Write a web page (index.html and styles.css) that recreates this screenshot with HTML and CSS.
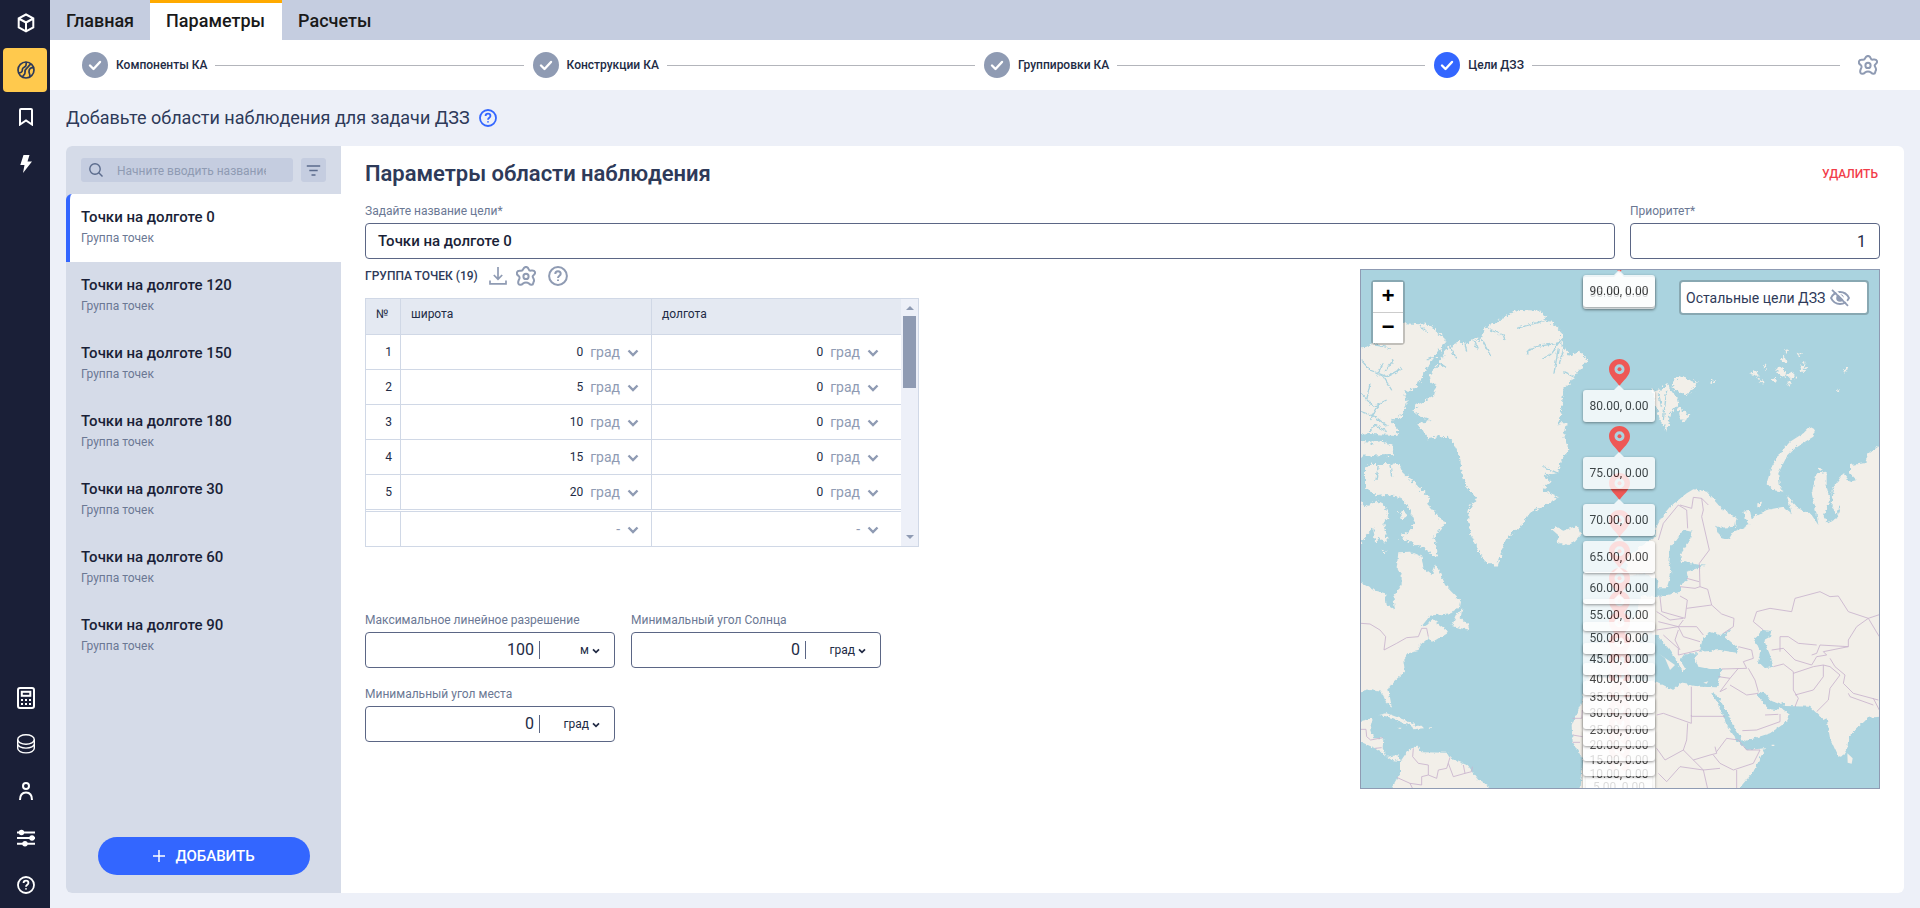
FILE: index.html
```html
<!DOCTYPE html>
<html lang="ru">
<head>
<meta charset="utf-8">
<title>Цели ДЗЗ</title>
<link rel="stylesheet" href="styles.css">
</head>
<body>
<svg class="defs" width="0" height="0">
  <symbol id="gear" viewBox="0 0 20 20"><path d="M10 .9c1.700 0 2.300 1 2.700 2.300.3 1 1.200 1.600 2.300 1.400 1.700-.3 3.300-.2 3.900 1.200.6 1.500-.2 2.500-1.400 3.400-.9.700-1 1.700-.4 2.600.9 1.400 1.300 3.100.4 4.300-.4 1.500-.2 2.600-1.700 2.700-1.600.2-2.300-.7-3.100-1.500-.9-.7-1.900-.8-2.700-.8s-1.800.1-2.700.8c-.8.8-1.500 1.700-3.100 1.500-1.500-.1-2.100-1.200-2-2.700.1-1.200.9-2.600 1.300-3.900.2-1-.2-1.800-1-2.400C1.300 9 .5 7.900.9 6.400 1.400 4.900 2.800 4.500 4.500 4.700c1.200.2 2.300-.4 2.700-1.500C7.700 1.900 8.300.9 10 .9z"/><circle cx="10" cy="10.400" r="2.600"/></symbol>
  <symbol id="help" viewBox="0 0 20 20"><circle cx="10" cy="10" r="8.900"/><path d="M7.300 7.900c0-1.700 1.100-2.700 2.700-2.700s2.700 1 2.700 2.500c0 2-2.700 2-2.700 4.200M10 13.600v1.500"/></symbol>
  <symbol id="chev" viewBox="0 0 12 8"><path d="M1.500 1.500 6 6l4.500-4.500"/></symbol>
  <symbol id="check" viewBox="0 0 26 26"><circle class="disc" cx="13" cy="13" r="13"/><path d="M8 13.500l3.500 3.500L18 10"/></symbol>
  <symbol id="pin" viewBox="0 0 21 27"><path fill-rule="evenodd" d="M10.500 0C4.700 0 0 4.500 0 10.200 0 17 7 21.500 10.500 27 14 21.500 21 17 21 10.200 21 4.500 16.300 0 10.500 0zm0 5.200a5 5 0 1 1 0 10 5 5 0 0 1 0-10z"/><circle cx="10.500" cy="10.200" r="2"/></symbol>
</svg>
<div class="app">
  <nav class="rail">
    <div class="rail-group">
      <a class="rail-item"><svg width="18" height="20" viewBox="0 0 18 20"><path d="M9 1.500l7.300 3.800v9L9 18.300l-7.300-4v-9zM1.700 5.500L9 9.500l7.300-4M9 9.500v8.500"/></svg></a>
      <a class="rail-item active"><svg width="18" height="18" viewBox="0 0 18 18"><circle cx="9" cy="9" r="8"/><path d="M1.500 11.800C4 11.800 5.500 11 5.300 8.800 5.100 6.600 7 6.500 8.300 5.500 9.700 4.400 8.700 2.500 9.500 1M5.500 16.300C5.500 14 8.200 14 8 11.500 7.800 9 8.600 8 10 7 11.500 6 11.500 4.300 14 3M16.800 7C14 6 12 8 12 10.500S13.500 13 12.800 16.300"/></svg></a>
      <a class="rail-item"><svg width="14" height="18" viewBox="0 0 14 18"><path d="M1 2a1 1 0 0 1 1-1h10a1 1 0 0 1 1 1v14.500l-6-4-6 4z"/></svg></a>
      <a class="rail-item"><svg width="12" height="18" viewBox="0 0 12 18"><path class="solid" d="M3.500 0h6L7.500 6.500H12L3 18l1.500-8H.3z"/></svg></a>
    </div>
    <div class="rail-group">
      <a class="rail-item calc"><svg width="18" height="22" viewBox="0 0 18 22"><rect x="1" y="1" width="16" height="20" rx="2"/><rect x="4.800" y="4.800" width="8.500" height="4"/><path stroke-dasharray="2 2" d="M4 13h10M4 17h10"/></svg></a>
      <a class="rail-item thin"><svg width="18" height="20" viewBox="0 0 18 20"><ellipse cx="9" cy="5.500" rx="8.300" ry="4.700"/><path d="M.7 5.500v4.300c0 2.500 3.700 4.300 8.300 4.300s8.300-1.800 8.300-4.300V5.500M.7 9.800v4.400c0 2.600 3.700 4.700 8.300 4.700s8.300-2.100 8.300-4.700V9.800"/></svg></a>
      <a class="rail-item"><svg width="14" height="18" viewBox="0 0 14 18"><circle cx="7" cy="4" r="3"/><path d="M1 18c0-5 2-7.500 6-7.500s6 2.500 6 7.500"/></svg></a>
      <a class="rail-item"><svg width="18" height="18" viewBox="0 0 18 18"><path d="M0 3.500h18M0 9h18M0 14.700h18"/><circle class="solid" cx="4.500" cy="3.500" r="2.700"/><circle class="solid" cx="15" cy="9" r="2.700"/><circle class="solid" cx="8" cy="14.700" r="2.700"/></svg></a>
      <a class="rail-item"><svg width="18" height="18"><use href="#help"/></svg></a>
    </div>
  </nav>
  <div class="page">
    <header class="tabs"><a class="tab">Главная</a><a class="tab current">Параметры</a><a class="tab">Расчеты</a></header>
    <div class="stepper">
      <div class="steps">
        <svg class="mark"><use href="#check"/></svg><span class="step">Компоненты КА</span><i class="line"></i>
        <svg class="mark"><use href="#check"/></svg><span class="step">Конструкции КА</span><i class="line"></i>
        <svg class="mark"><use href="#check"/></svg><span class="step">Группировки КА</span><i class="line"></i>
        <svg class="mark on"><use href="#check"/></svg><span class="step">Цели ДЗЗ</span><i class="line last"></i>
      </div>
      <svg class="ico"><use href="#gear"/></svg>
    </div>
    <div class="title"><span>Добавьте области наблюдения для задачи ДЗЗ</span><svg class="ico blue"><use href="#help"/></svg></div>
    <main class="panel">
      <aside class="list">
        <div class="search-row">
          <div class="search"><svg width="14" height="14" viewBox="0 0 14 14"><circle cx="6" cy="6" r="5.200"/><path d="M9.800 9.800l3.700 3.700"/></svg><span>Начните вводить название</span></div>
          <div class="filter"><svg width="15" height="11" viewBox="0 0 15 11"><path d="M.8 1h13.400M3.300 5.500h8.400M5.500 10h4"/></svg></div>
        </div>
        <div class="item selected"><b>Точки на долготе 0</b><span>Группа точек</span></div>
        <div class="item"><b>Точки на долготе 120</b><span>Группа точек</span></div>
        <div class="item"><b>Точки на долготе 150</b><span>Группа точек</span></div>
        <div class="item"><b>Точки на долготе 180</b><span>Группа точек</span></div>
        <div class="item"><b>Точки на долготе 30</b><span>Группа точек</span></div>
        <div class="item"><b>Точки на долготе 60</b><span>Группа точек</span></div>
        <div class="item"><b>Точки на долготе 90</b><span>Группа точек</span></div>
        <button class="add"><svg width="12" height="12" viewBox="0 0 12 12"><path d="M6 0v12M0 6h12"/></svg>ДОБАВИТЬ</button>
      </aside>
      <section class="form">
        <div class="form-head"><h1>Параметры области наблюдения</h1><a class="delete">УДАЛИТЬ</a></div>
        <div class="row">
          <div class="field name"><label>Задайте название цели*</label><div class="input strong">Точки на долготе 0</div></div>
          <div class="field"><label>Приоритет*</label><div class="input right">1</div></div>
        </div>
        <div class="columns">
          <div class="params">
            <div class="group"><span>ГРУППА ТОЧЕК (19)</span>
              <svg class="ico dl" viewBox="0 0 20 20"><path d="M10 1v12M5.800 9L10 13.200 14.200 9M2 14.500v3.300h16v-3.300"/></svg>
              <svg class="ico g"><use href="#gear"/></svg>
              <svg class="ico"><use href="#help"/></svg>
            </div>
            <div class="table">
              <div class="grid">
                <div class="th">№</div><div class="th">широта</div><div class="th">долгота</div>
                <div class="n">1</div><div class="td">0<em>град</em><svg><use href="#chev"/></svg></div><div class="td">0<em>град</em><svg><use href="#chev"/></svg></div>
                <div class="n">2</div><div class="td">5<em>град</em><svg><use href="#chev"/></svg></div><div class="td">0<em>град</em><svg><use href="#chev"/></svg></div>
                <div class="n">3</div><div class="td">10<em>град</em><svg><use href="#chev"/></svg></div><div class="td">0<em>град</em><svg><use href="#chev"/></svg></div>
                <div class="n">4</div><div class="td">15<em>град</em><svg><use href="#chev"/></svg></div><div class="td">0<em>град</em><svg><use href="#chev"/></svg></div>
                <div class="n">5</div><div class="td">20<em>град</em><svg><use href="#chev"/></svg></div><div class="td">0<em>град</em><svg><use href="#chev"/></svg></div>
                <div class="n new"></div><div class="td new"><em>-</em><svg><use href="#chev"/></svg></div><div class="td new"><em>-</em><svg><use href="#chev"/></svg></div>
              </div>
              <div class="scroll"><i class="up"></i><i class="thumb"></i><i class="down"></i></div>
            </div>
            <div class="limits">
              <div class="field"><label>Максимальное линейное разрешение</label><div class="input unit"><span class="val">100</span><span class="u">м<svg><use href="#chev"/></svg></span></div></div>
              <div class="field"><label>Минимальный угол Солнца</label><div class="input unit"><span class="val">0</span><span class="u">град<svg><use href="#chev"/></svg></span></div></div>
              <div class="field"><label>Минимальный угол места</label><div class="input unit"><span class="val">0</span><span class="u">град<svg><use href="#chev"/></svg></span></div></div>
            </div>
          </div>
          <div class="map">
            <svg class="world" viewBox="33 30 1554 1554">
              <defs><filter id="coast" x="0" y="0" width="100%" height="100%"><feTurbulence type="fractalNoise" baseFrequency=".09" numOctaves="3" seed="4"/><feDisplacementMap in="SourceGraphic" scale="12" xChannelSelector="R" yChannelSelector="G"/></filter>
              <filter id="fjord" x="0" y="0" width="100%" height="100%"><feTurbulence type="fractalNoise" baseFrequency=".1" numOctaves="3" seed="9"/><feDisplacementMap in="SourceGraphic" scale="22" xChannelSelector="R" yChannelSelector="G"/></filter></defs>
              <g class="land" filter="url(#fjord)">
                <path d="M480 160L520 150 570 152 592 170 580 182 605 185 640 222 632 238 640 262 660 285 690 275 712 298 700 315 672 350 640 390 635 440 625 490 650 490 640 520 655 570 630 610 625 640 580 645 605 665 575 690 625 710 590 735 535 760 515 797 490 815 465 840 455 880 440 920 405 903 385 870 365 825 355 790 355 750 380 715 350 680 335 640 330 590 315 555 300 535 270 528 235 535 215 510 200 490 245 482 215 470 190 450 200 435 250 410 260 375 235 360 245 335 270 310 290 265 330 245 350 252 365 238 395 240 400 210 440 185z"/>
                <path d="M20 275L60 255 110 235 165 190 240 195 288 240 275 265 240 310 215 350 200 385 165 395 170 430 155 470 120 480 145 510 140 525 60 522 20 525z"/>
                <path d="M20 545L60 548 100 543 130 560 128 585 20 587z"/>
                <path d="M45 630L60 612 100 612 150 615 160 640 190 665 235 710 235 735 285 790 270 810 250 830 262 870 258 895 240 880 215 860 190 850 150 835 175 815 195 790 180 750 150 710 110 705 80 708 45 680z"/>
                <path d="M20 720L50 740 80 722 105 735 115 770 100 790 112 850 90 835 75 850 70 805 50 825 20 865z"/>
                <path d="M150 755L165 750 170 775 155 778zM95 870L110 872 100 880z"/>
                <path d="M905 385L925 395 950 370 975 405 990 430 960 460 952 515 930 480 915 430zM965 370L985 348 1040 365 1030 390 1010 405 975 390zM985 440L1015 465 1005 488 990 470zM1080 365L1097 360 1090 370z"/>
                <path d="M1195 340L1215 332 1230 350 1215 345zM1225 355L1245 365 1235 375zM1238 325L1249 312 1247 330zM1260 360L1280 352 1275 368zM1275 330L1295 320 1310 345 1295 350zM1290 300L1305 290 1310 310zM1303 268L1317 270 1310 282zM1340 278L1355 281 1347 292zM1310 345L1325 335 1340 350 1325 360zM1350 325L1365 308 1368 325 1357 337zM1308 368L1322 366 1318 379zM1482 324L1494 326 1488 337zM1458 386L1472 391 1466 398z"/>
              </g>
              <g class="land" filter="url(#coast)">
                <path d="M145 877L180 875 215 890 220 925 245 945 258 913 285 975 333 1025 330 1040 300 1060 240 1067 210 1105 250 1080 290 1110 295 1118 260 1140 245 1145 235 1135 210 1155 205 1173 175 1180 160 1200 165 1235 130 1265 115 1285 125 1340 108 1325 95 1295 60 1290 20 1300 20 960 70 990 105 1000 110 1035 135 1050 130 1010 155 975 155 945 140 925z"/>
                <path d="M305 1098L325 1055 337 1045 332 1075 355 1095 358 1110 330 1103z"/>
                <path d="M605 808L620 802 640 812 680 797 693 825 675 845 650 857 620 845 628 828z"/>
                <path d="M20 1385L68 1375 60 1405 70 1435 100 1435 98 1465 110 1490 145 1485 152 1503 175 1470 200 1457 215 1477 290 1478 300 1495 350 1515 385 1560 440 1595 118 1595 150 1540 150 1503 125 1500 75 1465 20 1440z"/>
                <path d="M88 1365L110 1360 190 1390 197 1397 165 1392 130 1375zM185 1397L215 1397 222 1405 190 1408zM142 1403L158 1403 150 1407zM237 1402L248 1402 242 1407z"/>
                <path d="M1380 500L1398 510 1390 530 1340 560 1310 590 1285 640 1290 680 1300 695 1270 690 1250 670 1265 620 1290 580 1320 545 1360 520zM1222 730L1236 728 1232 742 1222 742zM1405 622L1418 628 1410 633z"/>
                <path d="M915 830L920 800 935 770 960 740 1010 700 1030 688 1070 695 1110 740 1160 775 1155 800 1110 803 1095 797 1115 835 1135 840 1150 815 1180 803 1195 795 1180 755 1200 752 1205 775 1250 750 1300 740 1325 760 1310 705 1345 745 1385 765 1405 795 1400 765 1385 700 1400 640 1430 635 1430 680 1440 720 1420 770 1435 790 1465 770 1445 740 1445 690 1480 640 1500 665 1520 660 1500 640 1500 615 1545 610 1555 580 1600 550 1600 1600 690 1600 700 1500 668 1445 665 1395 697 1320 720 1230 770 1200 800 1190 800 1100 860 1070 870 1010 920 1005 925 960 880 940 830 950 830 890z"/>
              </g>
              <g class="water" filter="url(#coast)">
                <path d="M1000 810L1025 815 1020 840 995 875 995 905 1065 917 1010 935 1015 960 990 975 990 995 930 1010 895 1010 910 985 950 985 965 935 955 905 960 865z"/>
                <path d="M1055 1145L1080 1115 1110 1125 1142 1107 1125 1130 1165 1165 1160 1178 1110 1170 1050 1175z"/>
                <path d="M1212 1135L1240 1110 1265 1113 1260 1130 1242 1140 1260 1185 1270 1220 1245 1225 1225 1205 1230 1175z"/>
                <path d="M880 1120L920 1125 955 1165 975 1195 997 1235 1005 1225 990 1200 1005 1180 1042 1180 1035 1195 1045 1220 1080 1227 1115 1227 1102 1282 1050 1280 990 1270 970 1290 920 1265 740 1250 740 1210 860 1180z"/>
                <path d="M1085 1295L1105 1310 1130 1355 1150 1395 1180 1445 1260 1420 1310 1385 1320 1365 1290 1340 1280 1350 1255 1347 1225 1310 1223 1295 1245 1300 1265 1323 1290 1333 1297 1325 1305 1338 1380 1340 1400 1360 1420 1380 1430 1375 1440 1435 1465 1490 1480 1485 1492 1465 1495 1430 1555 1373 1600 1370 1600 1600 1155 1600 1210 1535 1245 1465 1190 1470 1160 1440 1130 1395 1110 1345z"/>
              </g>
              <g class="land"><path d="M1492 1480L1508 1495 1505 1511 1493 1508zM1265 1454h8v4h-8zM1060 1268L1075 1264 1070 1271z"/><path d="M925 1180L975 1215 960 1230 945 1195z"/></g>
              <g class="cuts" filter="url(#coast)">
                <path d="M33 300L60 330 110 350 155 325M80 350L100 310M100 350L125 390M33 400L70 440 110 420M60 480L90 430M230 300L265 285M530 280C560 245 600 262 635 245M580 293C610 290 615 260 625 250M625 265L612 340M640 270L628 310M500 205L590 180M372 240L385 270M395 238L422 288M345 250L350 275M420 210L460 225 465 240M300 262L320 295M270 310L288 322M85 615L78 660M120 612L125 650M640 335L670 350M650 380L638 460M580 620L625 640M165 395L190 400M75 255L125 265M210 195L230 215M33 455L75 470 115 500M60 370L50 420M130 300L105 335M60 515L75 495 110 515"/>
                <path d="M925 400L935 440M950 390L940 480M1470 740L1460 770M1440 740L1450 690"/>
              </g>
              <g class="borders">
                <path d="M33 1090L60 1092 90 1110 107 1130 102 1170 140 1150 170 1133 205 1130 215 1105 230 1105 235 1130M33 1408L48 1408 50 1430 62 1440 98 1433M75 1465L95 1463M190 1465L188 1490 205 1510 235 1515 235 1545 260 1555 265 1530 290 1525 300 1492M295 1510L310 1550 345 1540 340 1515M345 1540L365 1535 367 1520M140 1552L180 1570 190 1590M180 1570L215 1575 215 1550 235 1545"/>
                <path d="M925 840L940 790 985 735 1010 750 1013 805M990 735L1025 745 1030 712 1055 715 1075 735M1055 715L1060 750 1055 770 1078 870 1048 910 1050 980"/>
                <path d="M930 1010L935 1055 1005 1075 1012 1020 990 1008M990 980L1035 985 1050 980 1073 988 1085 1035 1010 1045M1010 955L1047 965M1085 1035L1115 1062 1152 1075 1150 1100 1120 1120M920 1055L960 1080 1000 1075M1000 1080L985 1100 925 1085M920 1110L985 1100 1000 1130 1050 1145M985 1100L1040 1100 1060 1125M940 1125L985 1165 985 1185 1050 1170M985 1110L975 1140 990 1170"/>
                <path d="M1165 1160L1205 1170 1210 1195 1180 1205 1190 1225 1115 1227M1105 1250L1140 1255 1165 1225M1140 1255L1110 1295 1130 1285M1140 1275L1190 1305 1225 1300M1195 1225L1215 1260 1225 1295M1270 1220L1300 1212 1330 1235 1330 1290 1345 1315 1335 1340M1330 1240L1390 1220 1420 1215 1420 1250 1390 1290 1335 1305M1240 1110L1210 1085 1220 1055 1260 1045 1325 1055 1335 1015 1410 995 1440 1010 1465 1008 1495 1055 1555 1075 1600 1060M1555 1075L1520 1100 1495 1140 1495 1160 1410 1155 1400 1180 1385 1185M1290 1175L1290 1130 1315 1130 1345 1150 1400 1155M1265 1170L1300 1165 1335 1200 1385 1215 1400 1190 1430 1185 1420 1175 1495 1160M1420 1215L1440 1220 1470 1245 1440 1285 1435 1320 1400 1355M1440 1195L1455 1220 1485 1245 1480 1270 1510 1300 1585 1320M1495 1300L1500 1310 1570 1335M1570 1315L1588 1350M1555 1075L1588 1130"/>
                <path d="M1177 1412L1220 1410 1290 1385 1290 1362M1245 1365L1285 1363M1024 1280L1024 1369 1125 1369M1024 1365L1024 1390 940 1360 920 1365M1013 1390L1010 1440 1000 1470 945 1500 920 1465M1000 1470L1030 1500 1080 1485 1100 1480 1095 1460M1100 1475L1130 1435 1165 1440 1190 1470 1230 1470 1210 1510 1150 1530 1110 1510 1090 1485M1030 1500L1060 1530 1110 1525M1160 1530L1160 1590M925 1540L950 1565 990 1520 1060 1530 1075 1595M668 1375L695 1375 697 1350M668 1425L697 1430M668 1447L690 1447"/>
              </g>
            </svg>
            <div class="marker" style="top:509px"><svg><use href="#pin"/></svg><div class="tip">0.00, 0.00</div></div>
            <div class="marker" style="top:496px"><svg><use href="#pin"/></svg><div class="tip">5.00, 0.00</div></div>
            <div class="marker" style="top:483px"><svg><use href="#pin"/></svg><div class="tip">10.00, 0.00</div></div>
            <div class="marker" style="top:469px"><svg><use href="#pin"/></svg><div class="tip">15.00, 0.00</div></div>
            <div class="marker" style="top:454px"><svg><use href="#pin"/></svg><div class="tip">20.00, 0.00</div></div>
            <div class="marker" style="top:439px"><svg><use href="#pin"/></svg><div class="tip">25.00, 0.00</div></div>
            <div class="marker" style="top:422px"><svg><use href="#pin"/></svg><div class="tip">30.00, 0.00</div></div>
            <div class="marker" style="top:406px"><svg><use href="#pin"/></svg><div class="tip">35.00, 0.00</div></div>
            <div class="marker" style="top:388px"><svg><use href="#pin"/></svg><div class="tip">40.00, 0.00</div></div>
            <div class="marker" style="top:368px"><svg><use href="#pin"/></svg><div class="tip">45.00, 0.00</div></div>
            <div class="marker" style="top:347px"><svg><use href="#pin"/></svg><div class="tip">50.00, 0.00</div></div>
            <div class="marker" style="top:324px"><svg><use href="#pin"/></svg><div class="tip">55.00, 0.00</div></div>
            <div class="marker" style="top:297px"><svg><use href="#pin"/></svg><div class="tip">60.00, 0.00</div></div>
            <div class="marker" style="top:266px"><svg><use href="#pin"/></svg><div class="tip">65.00, 0.00</div></div>
            <div class="marker" style="top:229px"><svg><use href="#pin"/></svg><div class="tip">70.00, 0.00</div></div>
            <div class="marker" style="top:182px"><svg><use href="#pin"/></svg><div class="tip">75.00, 0.00</div></div>
            <div class="marker" style="top:115px"><svg><use href="#pin"/></svg><div class="tip">80.00, 0.00</div></div>
            <div class="marker" style="top:2px"><svg><use href="#pin"/></svg><div class="tip">85.00, 0.00</div></div>
            <div class="marker" style="top:0px"><svg><use href="#pin"/></svg><div class="tip">90.00, 0.00</div></div>
            <div class="zoom"><a>+</a><a>−</a></div>
            <div class="others">Остальные цели ДЗЗ<svg width="20" height="18" viewBox="0 0 20 18"><path d="M1 9c2-4 5-6 9-6s7 2 9 6c-2 4-5 6-9 6s-7-2-9-6z"/><circle class="eye" cx="10" cy="9" r="3.800"/><path class="gap" d="M3.500-.5l16 16"/><path d="M2 .8l16 16"/></svg></div>
          </div>
        </div>
      </section>
    </main>
  </div>
</div>
</body>
</html>
```
FILE: styles.css
```css
* { box-sizing: border-box; }
body { margin: 0; font-family: Roboto, sans-serif; font-size: 12px; color: #222b45; }
svg { fill: none; stroke: currentColor; flex: none; }
.defs { position: absolute; }
.app { display: flex; width: 1920px; height: 908px; overflow: hidden; background: #edf0f8; }

.rail { width: 50px; background: #1a1f37; color: #fff; display: flex; flex-direction: column; justify-content: space-between; padding: 1px 0 1px 3px; }
.rail-group { display: flex; flex-direction: column; gap: 3px; }
.rail-item { width: 44px; height: 44px; border-radius: 4px; display: flex; align-items: center; justify-content: center; padding-left: 2px; }
.rail-item svg { stroke-width: 2; }
.rail-item.calc { padding-top: 2px; }
.rail-item.thin svg { stroke-width: 1.4; }
.rail-item.active { background: #ffc94d; color: #2e3a59; }
.rail-item.active svg { stroke-width: 1.7; }
.rail .solid { fill: currentColor; stroke: none; }

.page { flex: 1; display: flex; flex-direction: column; }
.tabs { height: 40px; background: #c5cde0; display: flex; }
.tab { padding: 0 16px; line-height: 42px; font-size: 18px; font-weight: 500; color: #191919; }
.tab.current { width: 132px; background: #fff; border-top: 3px solid #ffaa00; line-height: 36px; }

.stepper { height: 50px; background: #fff; display: flex; align-items: center; padding-left: 32px; }
.steps { width: 1758px; display: flex; align-items: center; margin-right: 18px; }
.mark { width: 26px; height: 26px; stroke: #fff; stroke-width: 2.4; stroke-linecap: round; stroke-linejoin: round; color: #8f9bb3; }
.disc { fill: currentColor; stroke: none; }
.mark.on { color: #3366ff; }
.step { margin: 0 8px; font-weight: 500; }
.line { flex: 1; height: 1px; background: #b3b5bb; margin-right: 9px; }
.line.last { margin-right: 0; }
.ico { width: 20px; height: 20px; color: #8f9bb3; stroke-width: 2; }
.title { height: 56px; padding: 0 0 1px 16px; display: flex; align-items: center; gap: 9px; font-size: 18px; color: #2e3a59; }
.title .ico { width: 18px; height: 18px; color: #3366ff; }

.panel { width: 1838px; height: 747px; margin-left: 16px; display: flex; border-radius: 6px; background: #fff; overflow: hidden; }
.list { width: 275px; background: #d5dbe8; display: flex; flex-direction: column; }
.search-row { height: 48px; padding: 12px 15px; display: flex; gap: 8px; }
.search { width: 212px; height: 24px; border-radius: 3px; background: #c5cde0; display: flex; align-items: center; padding-left: 8px; color: #5b6b8c; }
.search svg { stroke-width: 1.4; }
.search span { width: 149px; margin-left: 14px; padding-top: 1px; overflow: hidden; white-space: nowrap; color: #8f9bb3; }
.filter { width: 25px; height: 24px; border-radius: 3px; background: #c5cde0; color: #5b6b8c; display: flex; align-items: center; justify-content: center; }
.filter svg { stroke-width: 1.4; }
.item { height: 68px; padding: 14px 0 0 15px; display: flex; flex-direction: column; }
.item b { font-size: 15px; font-weight: 500; line-height: 18px; color: #1a1f37; }
.item span { line-height: 14px; margin-top: 5px; color: #6b7894; }
.item.selected { background: #fff; border-left: 4px solid #3366ff; border-top-left-radius: 6px; padding-left: 11px; }
.add { width: 212px; height: 38px; margin: auto 0 18px 32px; border: 0; border-radius: 19px; background: #3366ff; color: #fff; font: 500 15px Roboto, sans-serif; display: flex; align-items: center; justify-content: center; gap: 10px; padding: 0; }
.add svg { stroke-width: 1.5; }

.form { flex: 1; padding: 12px 24px 0 24px; }
.form-head { height: 32px; display: flex; align-items: center; justify-content: space-between; }
h1 { margin: -2px 0 0; font-size: 22px; font-weight: 600; letter-spacing: -.03px; color: #2e3a59; }
.delete { color: #f23d4a; font-weight: 500; margin-right: 2px; }
.row { display: flex; gap: 15px; padding-top: 14px; }
.field { width: 250px; }
.field.name { width: 1250px; }
label { display: block; line-height: 14px; height: 19px; color: #6b7894; }
.input { height: 36px; border: 1px solid #5b6685; border-radius: 4px; background: #fff; display: flex; align-items: center; padding: 0 13px 0 12px; font-size: 15px; color: #222b45; }
.input.strong { font-weight: 500; color: #1a1f37; }
.input.right { justify-content: flex-end; font-size: 16px; }
.columns { display: flex; justify-content: space-between; padding-top: 10px; }
.params { width: 554px; }
.group { height: 29px; display: flex; align-items: flex-start; font-weight: 500; color: #2e3a59; }
.group span { line-height: 14px; }
.group .ico { margin-top: -3px; }
.group .dl { margin: -3px 8px 0 10px; stroke-width: 1.7; }
.group .g { margin-right: 12px; }
.table { display: flex; border: 1px solid #d0d8e6; height: 249px; }
.grid { width: 535px; display: grid; grid-template-columns: 35px 251px 249px; grid-template-rows: 36px repeat(5, 35px) 36px; }
.grid > div { border-bottom: 1px solid #d0d8e6; border-right: 1px solid #d0d8e6; display: flex; align-items: center; }
.grid > div:nth-child(3n) { border-right: 0; padding-right: 22px; }
.grid .th { background: #e4e9f2; padding: 0 9px 5px 10px; }
.grid .n { justify-content: flex-end; padding-right: 8px; }
.grid .td { justify-content: flex-end; padding-right: 12px; padding-bottom: 1px; }
.td em { font-style: normal; font-size: 14px; color: #8f9bb3; margin: 0 7px; }
.td svg { width: 12px; height: 8px; color: #8f9bb3; stroke-width: 2.4; margin-top: 3px; }
.grid > .new { border-top: 1px solid #d0d8e6; border-bottom: 0; margin-top: 1px; }
.scroll { background: #edf0f8; padding: 7px 2px; display: flex; flex-direction: column; align-items: center; flex: 1; }
.up, .down { border: 4px solid transparent; border-top: 0; border-bottom: 4px solid #8f9bb3; }
.down { border-bottom: 0; border-top: 4px solid #8f9bb3; margin-top: auto; }
.thumb { width: 13px; height: 72px; background: #8f9bb3; margin-top: 6px; }
.limits { display: flex; flex-wrap: wrap; gap: 19px 16px; margin-top: 66px; }
.unit { padding: 0; font-size: 16px; }
.unit .val { width: 174px; height: 18px; line-height: 18px; border-right: 1px solid #5b6685; padding-right: 5px; text-align: right; }
.unit .u { flex: 1; display: flex; justify-content: flex-end; align-items: center; gap: 3px; font-size: 12px; padding-right: 14px; }
.unit svg { width: 8px; height: 6px; stroke-width: 2.6; margin-top: 2px; }

.map { width: 520px; height: 520px; border: 1px solid #8f9bb3; position: relative; overflow: hidden; }
.world { display: block; width: 518px; height: 518px; background: #aad3df; stroke: none; }
.land { fill: #f2efe9; }
.water { fill: #aad3df; }
.cuts { stroke: #aad3df; stroke-width: 4; }
.borders { stroke: #c8b2cc; stroke-width: 2.5; stroke-linejoin: round; }
.marker { position: absolute; left: 258px; width: 0; display: flex; justify-content: center; color: #ee5855; }
.marker svg { position: absolute; left: -10px; top: -26px; width: 21px; height: 27px; fill: currentColor; stroke: none; }
.tip { position: relative; flex: none; margin-top: 5px; height: 32px; line-height: 32px; padding: 0 7px; border-radius: 3px; background: #fff; opacity: .8; color: #222; box-shadow: 0 1px 3px rgba(0, 0, 0, .5); white-space: nowrap; }
.tip::before { content: ""; position: absolute; left: 50%; top: -5px; margin-left: -5px; border: 5px solid transparent; border-top: 0; border-bottom-color: #fff; }
.zoom { position: absolute; left: 10px; top: 10px; width: 34px; border: 2px solid rgba(0, 0, 0, .2); border-radius: 4px; background-clip: padding-box; }
.zoom a { display: block; height: 30px; background: #fff; color: #000; text-align: center; font: bold 22px/32px "Liberation Mono", monospace; }
.zoom a:first-child { height: 31px; border-bottom: 1px solid #ccc; }
.others { position: absolute; right: 10px; top: 10px; width: 190px; height: 35px; border: 2px solid rgba(0, 0, 0, .2); border-radius: 4px; background: #fff; background-clip: padding-box; display: flex; align-items: center; padding-left: 5px; gap: 5px; font-size: 14px; color: #2e3a59; }
.others svg { color: #8f9bb3; stroke-width: 1.8; }
.eye { fill: currentColor; stroke: none; }
.gap { stroke: #fff; }
```
